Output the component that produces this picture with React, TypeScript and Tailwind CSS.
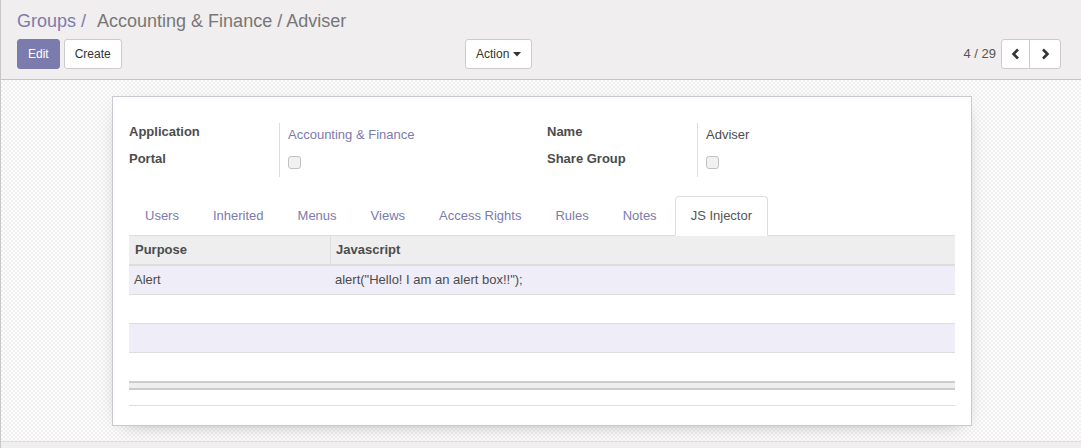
import React from "react"

const tabs = ["Users", "Inherited", "Menus", "Views", "Access Rights", "Rules", "Notes", "JS Injector"]

function Checkbox() {
  return <span className="block w-[13px] h-[13px] rounded-[3px] border border-[#c2c2c2] bg-[#f1f1f1]" />
}

function Chevron({ dir }: { dir: "left" | "right" }) {
  return (
    <svg width="10" height="12" viewBox="0 0 10 12">
      <polyline
        points={dir === "left" ? "7,1.5 2.5,6 7,10.5" : "3,1.5 7.5,6 3,10.5"}
        fill="none" stroke="#333" strokeWidth="2.6" strokeLinejoin="miter" />
    </svg>
  )
}

function FieldRow({ label, children }: { label: string; children: React.ReactNode }) {
  return (
    <div className="flex">
      <div className="w-[150px] font-bold text-[#4c4c4c] h-[27px] leading-[17px]">{label}</div>
      <div className="border-l border-[#dcdcdc] pl-2 h-[27px]">{children}</div>
    </div>
  )
}

export default function App() {
  return (
    <div className="h-[448px] overflow-hidden border-l border-[#c8c8c8] font-['Liberation_Sans',Arial,sans-serif] text-[13px] text-[#4c4c4c] flex flex-col">
      {/* control panel */}
      <div className="h-[80px] shrink-0 bg-[#f0eeee] border-b border-[#c4c4c4] px-4 pt-[10px]">
        <div className="text-[18px] leading-[22px] flex">
          <span className="text-[#7c7bad]">Groups</span>
          <span className="text-[#7c7bad] pl-[5px] pr-[11px]">/</span>
          <span className="text-[#777]">Accounting &amp; Finance / Adviser</span>
        </div>
        <div className="flex items-center mt-[7px] text-[12px]">
          <div className="w-[448px] flex gap-[4px]">
            <button className="h-[30px] px-[10px] rounded-[3px] bg-[#7c7bad] border border-[#7c7bad] text-white">Edit</button>
            <button className="h-[30px] px-[10px] rounded-[3px] bg-white border border-[#ccc] text-[#333]">Create</button>
          </div>
          <button className="h-[30px] px-[10px] rounded-[3px] bg-white border border-[#ccc] text-[#333] flex items-center gap-[4px]">
            Action
            <svg width="8" height="5" viewBox="0 0 8 5"><polygon points="0,0 8,0 4,4.5" fill="#333" /></svg>
          </button>
          <div className="ml-auto flex items-center pr-[4px] text-[13px]">
            <span className="mr-[5px] text-[#555]">4 / 29</span>
            <div className="flex h-[30px] bg-white border border-[#ccc] rounded-[3px]">
              <button className="w-[28px] flex items-center justify-center border-r border-[#ccc]"><Chevron dir="left" /></button>
              <button className="w-[30px] flex items-center justify-center"><Chevron dir="right" /></button>
            </div>
          </div>
        </div>
      </div>

      {/* sheet area */}
      <div className="flex-1 bg-[image:repeating-conic-gradient(#f1f1f1_0%_25%,#fcfcfc_0%_50%)] bg-[length:4px_4px] pt-4">
        <div className="w-[860px] ml-[111px] bg-white border border-[#c9c9cf] shadow-[0_5px_20px_-12px_rgba(0,0,0,0.5)] px-4 pt-[26px] pb-[19px]">
          <div className="flex">
            <div className="w-[418px]">
              <FieldRow label="Application">
                <span className="block text-[#7c7bad] pt-[2px]">Accounting &amp; Finance</span>
              </FieldRow>
              <FieldRow label="Portal">
                <span className="block pt-[6px]"><Checkbox /></span>
              </FieldRow>
            </div>
            <div className="flex-1">
              <FieldRow label="Name">
                <span className="block pt-[2px]">Adviser</span>
              </FieldRow>
              <FieldRow label="Share Group">
                <span className="block pt-[6px]"><Checkbox /></span>
              </FieldRow>
            </div>
          </div>

          {/* tabs */}
          <div className="mt-[19px] flex border-b border-[#ddd]">
            {tabs.map((t) => {
              const active = t === "JS Injector"
              return (
                <div
                  key={t}
                  className={`h-[40px] px-[15px] mr-[2px] -mb-px flex items-center rounded-t-[4px] border ${
                    active ? "bg-white border-[#ddd] border-b-white text-[#555]" : "border-transparent text-[#7c7bad]"
                  }`}
                >
                  {t}
                </div>
              )
            })}
          </div>

          {/* list */}
          <div>
            <div className="flex h-[30px] bg-[#eee] border-b-2 border-[#ddd] font-bold">
              <div className="w-[202px] pl-[6px] flex items-center border-r border-[#ddd]">Purpose</div>
              <div className="flex-1 pl-[5px] flex items-center">Javascript</div>
            </div>
            <div className="flex h-[29px] bg-[#eeedf8] border-b border-[#ddd] items-center">
              <div className="w-[202px] pl-[5px]">Alert</div>
              <div className="flex-1 pl-[4px]">alert("Hello! I am an alert box!!");</div>
            </div>
            <div className="h-[29px] bg-white border-b border-[#ddd]" />
            <div className="h-[29px] bg-[#eeedf8] border-b border-[#ddd]" />
            <div className="h-[28px] bg-white" />
            <div className="h-[9px] bg-[#eee] border-t-2 border-b-2 border-[#ccc]" />
            <div className="h-[16px] bg-white border-b border-[#ddd]" />
          </div>
        </div>
      </div>
      <div className="h-[7px] shrink-0 bg-[#f0eeee] border-t border-[#ddd]" />
    </div>
  )
}
